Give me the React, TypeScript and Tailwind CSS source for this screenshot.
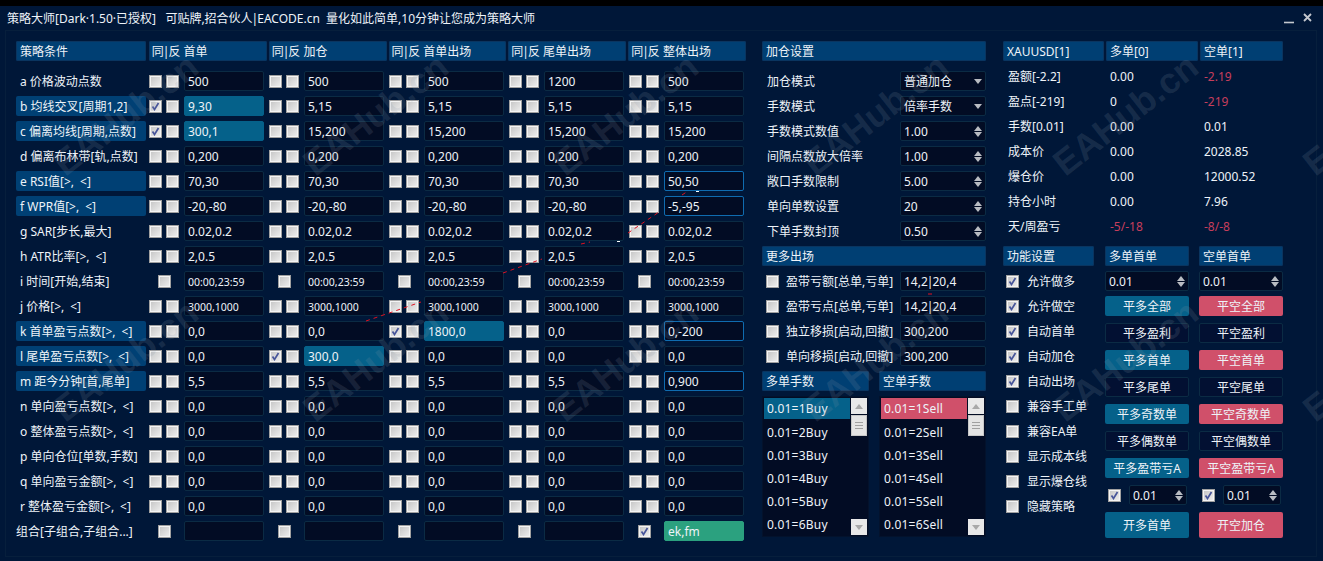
import type { ReactNode } from 'react';

type CellMode = 'normal' | 'active' | 'focus' | 'green';

interface Cell {
    value: string;
    mode?: CellMode;
    checked?: boolean;
}

const inputStyles: Record<CellMode, string> = {
    normal: 'bg-[#020c24] border-[#0b2b44]',
    active: 'bg-[#05618a] border-[#05618a]',
    focus: 'bg-[#020c24] border-[#0f6cb0]',
    green: 'bg-[#2ba17f] border-[#2ba17f]',
};

// one row of the strategy table
const same = (value: string): Cell[] => Array.from({ length: 5 }, () => ({ value }));

const withCells = (value: string, overrides: Record<number, Cell>): Cell[] =>
    same(value).map((c, i) => overrides[i] ?? c);

const conditionRows: { label: string; highlight?: boolean; cells: Cell[]; single?: boolean; small?: boolean }[] = [
    { label: 'a 价格波动点数', cells: withCells('500', { 3: { value: '1200' } }) },
    { label: 'b 均线交叉[周期1,2]', highlight: true, cells: withCells('5,15', { 0: { value: '9,30', mode: 'active', checked: true } }) },
    { label: 'c 偏离均线[周期,点数]', highlight: true, cells: withCells('15,200', { 0: { value: '300,1', mode: 'active', checked: true } }) },
    { label: 'd 偏离布林带[轨,点数]', cells: same('0,200') },
    { label: 'e RSI值[>,\u2002<]', highlight: true, cells: withCells('70,30', { 4: { value: '50,50', mode: 'focus' } }) },
    { label: 'f WPR值[>,\u2002<]', highlight: true, cells: withCells('-20,-80', { 4: { value: '-5,-95', mode: 'focus' } }) },
    { label: 'g SAR[步长,最大]', cells: same('0.02,0.2') },
    { label: 'h ATR比率[>,\u2002<]', cells: same('2,0.5') },
    { label: 'i 时间[开始,结束]', cells: same('00:00,23:59'), single: true, small: true },
    { label: 'j 价格[>,\u2002<]', cells: same('3000,1000'), small: true },
    { label: 'k 首单盈亏点数[>,\u2002<]', highlight: true, cells: withCells('0,0', { 2: { value: '1800,0', mode: 'active', checked: true }, 4: { value: '0,-200', mode: 'focus' } }) },
    { label: 'l 尾单盈亏点数[>,\u2002<]', highlight: true, cells: withCells('0,0', { 1: { value: '300,0', mode: 'active', checked: true } }) },
    { label: 'm 距今分钟[首,尾单]', highlight: true, cells: withCells('5,5', { 4: { value: '0,900', mode: 'focus' } }) },
    { label: 'n 单向盈亏点数[>,\u2002<]', cells: same('0,0') },
    { label: 'o 整体盈亏点数[>,\u2002<]', cells: same('0,0') },
    { label: 'p 单向仓位[单数,手数]', cells: same('0,0') },
    { label: 'q 单向盈亏金额[>,\u2002<]', cells: same('0,0') },
    { label: 'r 整体盈亏金额[>,\u2002<]', cells: same('0,0') },
];

const columnTitles = ['首单', '加仓', '首单出场', '尾单出场', '整体出场'];

const stats = [
    { label: '盈额[-2.2]', long: '0.00', short: '-2.19', shortRed: true },
    { label: '盈点[-219]', long: '0', short: '-219', shortRed: true },
    { label: '手数[0.01]', long: '0.00', short: '0.01' },
    { label: '成本价', long: '0.00', short: '2028.85' },
    { label: '爆仓价', long: '0.00', short: '12000.52' },
    { label: '持仓小时', long: '0.00', short: '7.96' },
    { label: '天/周盈亏', long: '-5/-18', short: '-8/-8', longRed: true, shortRed: true },
];

const addSettings: { label: string; value: string; kind: 'select' | 'spin' }[] = [
    { label: '加仓模式', value: '普通加仓', kind: 'select' },
    { label: '手数模式', value: '倍率手数', kind: 'select' },
    { label: '手数模式数值', value: '1.00', kind: 'spin' },
    { label: '间隔点数放大倍率', value: '1.00', kind: 'spin' },
    { label: '敞口手数限制', value: '5.00', kind: 'spin' },
    { label: '单向单数设置', value: '20', kind: 'spin' },
    { label: '下单手数封顶', value: '0.50', kind: 'spin' },
];

const moreExits = [
    { label: '盈带亏额[总单,亏单]', value: '14,2', rest: '20,4' },
    { label: '盈带亏点[总单,亏单]', value: '14,2', rest: '20,4' },
    { label: '独立移损[启动,回撤]', value: '300,200' },
    { label: '单向移损[启动,回撤]', value: '300,200' },
];

const features = [
    { label: '允许做多', checked: true },
    { label: '允许做空', checked: true },
    { label: '自动首单', checked: true },
    { label: '自动加仓', checked: true },
    { label: '自动出场', checked: true },
    { label: '兼容手工单' },
    { label: '兼容EA单' },
    { label: '显示成本线' },
    { label: '显示爆仓线' },
    { label: '隐藏策略' },
];

const closeButtons = [
    { name: '全部', filled: true },
    { name: '盈利' },
    { name: '首单', filled: true },
    { name: '尾单' },
    { name: '奇数单', filled: true },
    { name: '偶数单' },
    { name: '盈带亏A', filled: true },
];

const watermarks = [
    [50, 177], [300, 177], [550, 177], [800, 177], [1050, 177], [1300, 177],
    [50, 423], [300, 423], [550, 423], [800, 423], [1050, 423], [1300, 423],
];

function Check({ checked }: { checked?: boolean }) {
    return (
        <span className="flex h-[13px] w-[13px] shrink-0 items-center justify-center border border-[#a0a0a0] bg-gradient-to-br from-[#c4c4c4] to-[#f0f0f0] shadow-[inset_0_0_0_1px_#f4f4f4]">
            {checked && (
                <svg width="9" height="9" viewBox="0 0 9 9" fill="none">
                    <path d="M1.5 4.5 L3.5 7.5 L7.5 1" stroke="#47559a" strokeWidth="1.7" />
                </svg>
            )}
        </span>
    );
}

function Pipe() {
    return <span className="-mx-px">|</span>;
}

function Header({ children, className = '' }: { children: ReactNode; className?: string }) {
    return (
        <div className={`flex h-5 items-center rounded-[2px] bg-[#003f73] pl-1 pt-[2px] shadow-[inset_0_0_0_1px_#0a3560] ${className}`}>
            {children}
        </div>
    );
}

function Field({ children, mode = 'normal', className = '' }: { children?: ReactNode; mode?: CellMode; className?: string }) {
    return (
        <div className={`flex h-5 items-center rounded-[2px] border pl-[3px] pt-[2px] ${inputStyles[mode]} ${className}`}>
            {children}
        </div>
    );
}

function Arrow({ up }: { up?: boolean }) {
    return (
        <svg width="8" height="5" viewBox="0 0 8 5">
            <path d={up ? 'M4 0 L8 5 L0 5 Z' : 'M0 0 L8 0 L4 5 Z'} fill="#b9bcc2" />
        </svg>
    );
}

function Spin() {
    return (
        <span className="-mt-[2px] ml-auto mr-[3px] flex flex-col gap-[1px]">
            <Arrow up />
            <Arrow />
        </span>
    );
}

function ConditionRow({ row }: { row: (typeof conditionRows)[number] }) {
    return (
        <div className="flex h-5">
            <div className={`flex w-[130px] items-center whitespace-pre rounded-[2px] pl-1 pt-[2px] ${row.highlight ? 'bg-[#004074]' : ''}`}>
                {row.label}
            </div>
            {row.cells.map((cell, i) => (
                <div key={i} className="ml-[3px] mr-[2px] flex w-[115px] items-center">
                    <div className={`flex w-[30px] items-center ${row.single ? 'justify-center' : 'justify-between'}`}>
                        <Check checked={cell.checked} />
                        {!row.single && <Check />}
                    </div>
                    <Field mode={cell.mode} className={`ml-[5px] w-20 ${row.small ? 'text-[10.5px]' : ''}`}>
                        {cell.value}
                    </Field>
                </div>
            ))}
        </div>
    );
}

function ListBox({ side }: { side: 'Buy' | 'Sell' }) {
    return (
        <div className="relative flex h-[141px] w-[107px] flex-col overflow-hidden border border-[#03122c] bg-[#020c24] pl-px pt-px">
            {[1, 2, 3, 4, 5, 6].map((n) => {
                const rowClass =
                    n > 1 ? 'h-[23px]' : side === 'Buy' ? 'mb-[2px] h-[21px] bg-[#05618a]' : 'mb-[2px] h-[21px] bg-[#d0506a]';
                return (
                    <div key={n} className={`flex w-[86px] shrink-0 items-center pl-[3px] tracking-[0.2px] ${rowClass}`}>
                        0.01={n}
                        {side}
                    </div>
                );
            })}
            {/* 滚动条 */}
            <div className="absolute bottom-0 right-px top-0 flex w-4 flex-col">
                <div className="mt-px flex h-4 items-center justify-center bg-[#e8e8e8]">
                    <svg width="8" height="5" viewBox="0 0 8 5">
                        <path d="M4 0 L8 5 L0 5 Z" fill="#a8a8a8" />
                    </svg>
                </div>
                <div className="mt-px flex h-[21px] flex-col items-center justify-center gap-[2px] border border-[#c8c8c8] bg-[#e4e4e4]">
                    <span className="h-px w-2 bg-[#a0a0a0]" />
                    <span className="h-px w-2 bg-[#a0a0a0]" />
                    <span className="h-px w-2 bg-[#a0a0a0]" />
                </div>
                <div className="mb-px mt-auto flex h-4 items-center justify-center bg-[#e8e8e8]">
                    <svg width="8" height="5" viewBox="0 0 8 5">
                        <path d="M0 0 L8 0 L4 5 Z" fill="#a8a8a8" />
                    </svg>
                </div>
            </div>
        </div>
    );
}

function TradeButton({ label, tone, filled, tall }: { label: string; tone: 'long' | 'short'; filled?: boolean; tall?: boolean }) {
    const fill = tone === 'long' ? 'bg-[#05618a]' : 'bg-[#d0506a]';
    return (
        <div
            className={`flex w-[84px] items-center justify-center rounded-[2px] pt-[2px] ${tall ? 'h-[26px]' : 'h-5'} ${
                filled ? fill : 'border border-[#0b2b44] bg-[#021032]'
            }`}
        >
            {label}
        </div>
    );
}

function TradeColumn({ tone }: { tone: 'long' | 'short' }) {
    const side = tone === 'long' ? '多' : '空';
    return (
        <div className="flex w-[84px] flex-col">
            <Header className="mb-[5px]">{side}单首单</Header>
            <Field className="mb-[5px] w-[84px]">
                0.01
                <Spin />
            </Field>
            <div className="flex flex-col gap-[7px]">
                {closeButtons.map((b) => (
                    <TradeButton key={b.name} label={`平${side}${b.name}`} tone={tone} filled={b.filled} />
                ))}
                <div className="flex h-5 items-center pl-[3px]">
                    <Check checked />
                    <Field className="ml-2 w-[58px]">
                        0.01
                        <Spin />
                    </Field>
                </div>
                <TradeButton label={tone === 'long' ? '开多首单' : '开空加仓'} tone={tone} filled tall />
            </div>
        </div>
    );
}

export default function App() {
    return (
        <div
            className="relative h-[561px] w-[1323px] overflow-hidden border-t-[6px] border-black bg-[#001738] text-[12px] leading-none text-[#eef3f8]"
            style={{ fontFamily: '"Noto Sans", "Noto Sans CJK SC", sans-serif' }}
        >
            {/* タイトルバー */}
            <div className="flex h-6 items-center pl-[7px] pr-[10px]">
                <span className="whitespace-pre pt-[2px]">
                    策略大师[Dark·1.50·已授权]{'   '}可贴牌,招合伙人
                    <Pipe />
                    EACODE.cn{'  '}量化如此简单,10分钟让您成为策略大师
                </span>
                <svg className="ml-auto" width="30" height="12" viewBox="0 0 30 12">
                    <path d="M1 10.5 H11" stroke="#c4c8cf" strokeWidth="1.6" />
                    <path d="M21 2 L28 9 M28 2 L21 9" stroke="#c4c8cf" strokeWidth="1.8" />
                </svg>
            </div>

            <div className="ml-[5px] mr-[6px] flex h-[527px] border border-[#071f3c] pl-[10px] pt-[10px]">
                {/* 策略条件 */}
                <div className="flex w-[730px] flex-col gap-[5px]">
                    <div className="mb-[5px] flex gap-[2px]">
                        <Header className="w-[130px]">策略条件</Header>
                        {columnTitles.map((title, i) => (
                            <Header key={title} className={`w-[118px] pl-[3px] ${i === 0 ? 'ml-px' : ''}`}>
                                同<Pipe />反&nbsp;{title}
                            </Header>
                        ))}
                    </div>
                    {conditionRows.map((row) => (
                        <ConditionRow key={row.label} row={row} />
                    ))}
                    <div className="flex h-5">
                        <div className="flex w-[130px] items-center pt-[2px]">组合[子组合,子组合...]</div>
                        {['', '', '', '', 'ek,fm'].map((v, i) => (
                            <div key={i} className="ml-[3px] mr-[2px] flex w-[115px] items-center">
                                <div className="flex w-[30px] justify-center">
                                    <Check checked={v !== ''} />
                                </div>
                                <Field mode={v ? 'green' : 'normal'} className="ml-[5px] w-20">
                                    {v}
                                </Field>
                            </div>
                        ))}
                    </div>
                </div>

                {/* 加仓设置 */}
                <div className="ml-[16px] flex w-[224px] flex-col">
                    <Header className="mb-[10px]">加仓设置</Header>
                    <div className="flex flex-col gap-[5px]">
                        {addSettings.map((s) => (
                            <div key={s.label} className="flex h-5 items-center pl-[5px]">
                                <span className="pt-[2px]">{s.label}</span>
                                <Field className="ml-auto w-[86px]">
                                    {s.value}
                                    {s.kind === 'select' ? (
                                        <span className="-mt-[2px] ml-auto mr-[3px]">
                                            <Arrow />
                                        </span>
                                    ) : (
                                        <Spin />
                                    )}
                                </Field>
                            </div>
                        ))}
                    </div>
                    <Header className="my-[5px]">更多出场</Header>
                    <div className="flex flex-col gap-[5px]">
                        {moreExits.map((m) => (
                            <div key={m.label} className="flex h-5 items-center pl-1">
                                <Check />
                                <span className="ml-[7px] whitespace-nowrap pt-[2px]">{m.label}</span>
                                <Field className="ml-auto w-[86px]">
                                    {m.value}
                                    {m.rest && (
                                        <>
                                            <Pipe />
                                            {m.rest}
                                        </>
                                    )}
                                </Field>
                            </div>
                        ))}
                    </div>
                    <div className="my-[5px] flex justify-between">
                        <Header className="w-[107px]">多单手数</Header>
                        <Header className="w-[107px]">空单手数</Header>
                    </div>
                    <div className="flex justify-between">
                        <ListBox side="Buy" />
                        <ListBox side="Sell" />
                    </div>
                </div>

                {/* 持仓信息 */}
                <div className="ml-[17px] flex w-[280px] flex-col">
                    <div className="mb-[5px] flex gap-[2px]">
                        <Header className="w-[101px]">XAUUSD[1]</Header>
                        <Header className="w-[92px]">多单[0]</Header>
                        <Header className="w-[83px]">空单[1]</Header>
                    </div>
                    <div className="flex flex-col gap-[5px]">
                        {stats.map((s) => (
                            <div key={s.label} className="flex h-5 items-center pt-[2px]">
                                <span className="w-[107px] pl-[5px]">{s.label}</span>
                                <span className={`w-[94px] ${s.longRed ? 'text-[#c73e5c]' : ''}`}>{s.long}</span>
                                <span className={s.shortRed ? 'text-[#c73e5c]' : ''}>{s.short}</span>
                            </div>
                        ))}
                    </div>
                    <div className="mt-[10px] flex">
                        <div className="flex w-[91px] flex-col">
                            <Header className="mb-[5px]">功能设置</Header>
                            <div className="flex flex-col gap-[5px]">
                                {features.map((f) => (
                                    <div key={f.label} className="flex h-5 items-center pl-[3px]">
                                        <Check checked={f.checked} />
                                        <span className="ml-2 whitespace-nowrap pt-[2px]">{f.label}</span>
                                    </div>
                                ))}
                            </div>
                        </div>
                        <div className="ml-[11px] flex gap-[10px]">
                            <TradeColumn tone="long" />
                            <TradeColumn tone="short" />
                        </div>
                    </div>
                </div>
            </div>

            {/* 水印 */}
            {watermarks.map(([x, y]) => (
                <span
                    key={`${x}-${y}`}
                    className="pointer-events-none absolute origin-bottom-left -rotate-[38deg] whitespace-nowrap text-[36px] font-bold leading-none text-[#8a97a8]/[0.17]"
                    style={{ left: x + 19, top: y - 37, fontFamily: '"Liberation Sans", sans-serif' }}
                >
                    EAHub.cn
                </span>
            ))}

            {/* 图表虚线 */}
            <svg className="pointer-events-none absolute left-0 top-[-6px]" width="1323" height="561">
                <path
                    d="M366 321 L421 302 M503 273 L542 259 M581 244 L590 242 M628 233 L659 212 M682 195 L688 191 M928 294 H932"
                    stroke="#e01020"
                    strokeWidth="1"
                    strokeDasharray="4 4"
                    fill="none"
                />
                <path d="M696 191.5 H699 M617 241.5 H620" stroke="#ffffff" strokeWidth="1" />
            </svg>
        </div>
    );
}
